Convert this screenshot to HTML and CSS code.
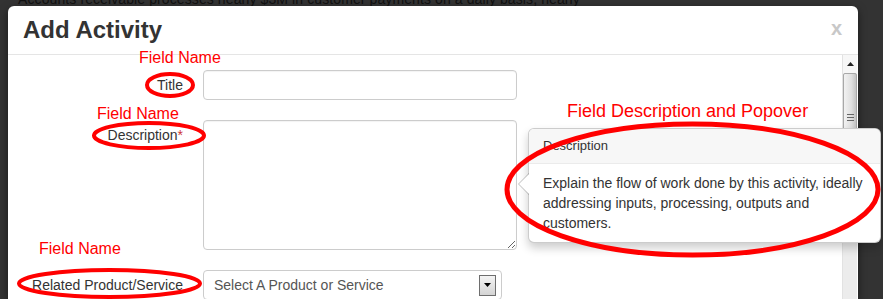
FILE: index.html
```html
<!DOCTYPE html>
<html lang="en">
<head>
    <meta charset="UTF-8">
    <meta name="viewport" content="width=device-width, initial-scale=1.0">
    <title>Add Activity</title>
    <link rel="stylesheet" href="styles.css">
</head>
<body>
    <p class="page-text"><span>Accounts receivable processes nearly $3M in customer payments on a daily basis, nearly</span></p>
    <div class="modal">
        <div class="modal-header">
            <h3>Add Activity</h3>
            <span class="close">x</span>
        </div>
        <div class="modal-body">
            <form class="form">
                <div class="field">
                    <label>Title</label>
                    <input type="text" class="input">
                </div>
                <div class="field">
                    <label>Description<span class="req">*</span></label>
                    <textarea class="input textarea"></textarea>
                </div>
                <div class="field">
                    <label>Related Product/Service</label>
                    <div class="select">
                        <span>Select A Product or Service</span>
                        <span class="select-btn">
                            <svg width="7" height="4" viewBox="0 0 7 4"><path d="M0 0h7L3.5 4z" fill="#000"/></svg>
                        </span>
                    </div>
                </div>
            </form>
            <div class="scrollbar">
                <div class="sb-up">
                    <svg width="7" height="4" viewBox="0 0 7 4"><path d="M0 4h7L3.5 0z" fill="#222"/></svg>
                </div>
                <div class="sb-thumb">
                    <svg width="7" height="7" viewBox="0 0 7 7"><path d="M0 .5h7M0 3.5h7M0 6.5h7" stroke="#666" stroke-width="1"/></svg>
                </div>
            </div>
            <!-- popover shown over the form -->
            <div class="popover">
                <div class="popover-arrow"></div>
                <h4 class="popover-title">Description</h4>
                <div class="popover-content">Explain the flow of work done by this activity, ideally addressing inputs, processing, outputs and customers.</div>
            </div>
        </div>
    </div>
    <!-- red annotation marks -->
    <svg class="annotations" width="883" height="299" viewBox="0 0 883 299">
        <g fill="none" stroke="#f00">
            <ellipse cx="170" cy="85" rx="23" ry="11" stroke-width="4"/>
            <ellipse cx="149" cy="135.5" rx="55" ry="12.5" stroke-width="4"/>
            <ellipse cx="109.5" cy="283.5" rx="90.5" ry="13.5" stroke-width="4"/>
            <ellipse cx="692.5" cy="189.5" rx="185.5" ry="65.5" stroke-width="5"/>
        </g>
        <g class="note" fill="#f00">
            <text x="139" y="63" font-size="16">Field Name</text>
            <text x="97" y="119" font-size="16">Field Name</text>
            <text x="39" y="254" font-size="16">Field Name</text>
            <text x="567" y="117" font-size="18">Field Description and Popover</text>
        </g>
    </svg>
</body>
</html>
```

FILE: styles.css
```css
html, body {
    height: 100%;
    overflow: hidden;
}
body {
    margin: 0;
    background-color: #333;
    font-family: 'Liberation Sans', Arial, sans-serif;
    color: #333;
    position: relative;
}
.page-text {
    margin: 0;
    height: 6px;
    padding-left: 18px;
    display: flex;
    align-items: flex-end;
    font-size: 14px;
    letter-spacing: 0.1px;
    color: #111;
    white-space: nowrap;
}
.page-text span {
    line-height: 1;
}
.modal {
    position: relative;
    margin-left: 8px;
    width: 850px;
    height: calc(100% - 6px);
    background: white;
    border-radius: 6px 6px 0 0;
    box-shadow: 0 3px 9px rgba(0,0,0,0.5);
}
.modal-header {
    height: 48px;
    border-bottom: 1px solid #e5e5e5;
    display: flex;
    justify-content: space-between;
    align-items: center;
    padding: 0 16px 0 15px;
}
.modal-header h3 {
    margin: 0;
    font-size: 24px;
    line-height: 26px;
    font-weight: bold;
    color: #333;
}
.close {
    font-size: 20px;
    line-height: 20px;
    font-weight: bold;
    color: #c8c8c8;
    margin-bottom: 5px;
}
.modal-body {
    position: relative;
    display: flex;
}
.form {
    flex: 1;
    padding-top: 15px;
}
.field {
    display: flex;
    gap: 20px;
    margin-bottom: 20px;
}
.field label {
    width: 175px;
    flex: none;
    text-align: right;
    font-size: 14px;
    line-height: 20px;
    padding-top: 5px;
    color: #333;
}
.req {
    color: #cc3333;
}
.input {
    box-sizing: border-box;
    width: 314px;
    height: 30px;
    border: 1px solid #ccc;
    border-radius: 4px;
    font-family: inherit;
    font-size: 14px;
    margin: 0;
    padding: 4px 10px;
    box-shadow: inset 0 1px 1px rgba(0,0,0,0.05);
}
.textarea {
    height: 130px;
    resize: vertical;
}
.select {
    box-sizing: border-box;
    width: 299px;
    height: 30px;
    border: 1px solid #ccc;
    border-radius: 4px;
    display: flex;
    align-items: center;
    justify-content: space-between;
    padding: 0 5px 0 10px;
    font-size: 14px;
    color: #555;
}
.select-btn {
    box-sizing: border-box;
    width: 17px;
    height: 21px;
    border: 1px solid #6e6e6e;
    background: linear-gradient(#f4f4f4, #d4d4d4);
    display: flex;
    align-items: center;
    justify-content: center;
}
.scrollbar {
    width: 15px;
    margin-right: 1px;
    height: 244px;
    background: #ececec;
    border-left: 1px solid #e2e2e2;
    box-sizing: border-box;
}
.sb-up {
    height: 18px;
    background: #f7f7f7;
    display: flex;
    align-items: center;
    justify-content: center;
}
.sb-thumb {
    box-sizing: border-box;
    height: 88px;
    border: 1px solid #a8a8a8;
    border-radius: 2px;
    background: linear-gradient(to right, #f2f2f2, #e0e0e0 60%, #c4c4c4);
    display: flex;
    align-items: center;
    justify-content: center;
}
.popover {
    position: absolute;
    left: 520px;
    top: 73px;
    width: 353px;
    box-sizing: border-box;
    background: white;
    border: 1px solid rgba(0,0,0,0.2);
    border-radius: 6px;
    box-shadow: 0 5px 10px rgba(0,0,0,0.2);
}
.popover-arrow {
    position: absolute;
    left: -11px;
    top: 44px;
    width: 0;
    height: 0;
    border-style: solid;
    border-width: 11px 11px 11px 0;
    border-color: transparent rgba(0,0,0,0.25) transparent transparent;
}
.popover-arrow::after {
    content: "";
    position: absolute;
    left: 1px;
    top: -10px;
    border-style: solid;
    border-width: 10px 10px 10px 0;
    border-color: transparent white transparent transparent;
}
.popover-title {
    margin: 0;
    padding: 8px 14px;
    font-size: 13px;
    line-height: 18px;
    font-weight: normal;
    background-color: #f7f7f7;
    border-bottom: 1px solid #ebebeb;
    border-radius: 5px 5px 0 0;
}
.popover-content {
    padding: 9px 14px;
    font-size: 14px;
    line-height: 20px;
    color: #333;
}
.annotations {
    position: absolute;
    left: 0;
    top: 0;
    pointer-events: none;
}
.note {
    font-family: 'Liberation Sans', Arial, sans-serif;
}
```
